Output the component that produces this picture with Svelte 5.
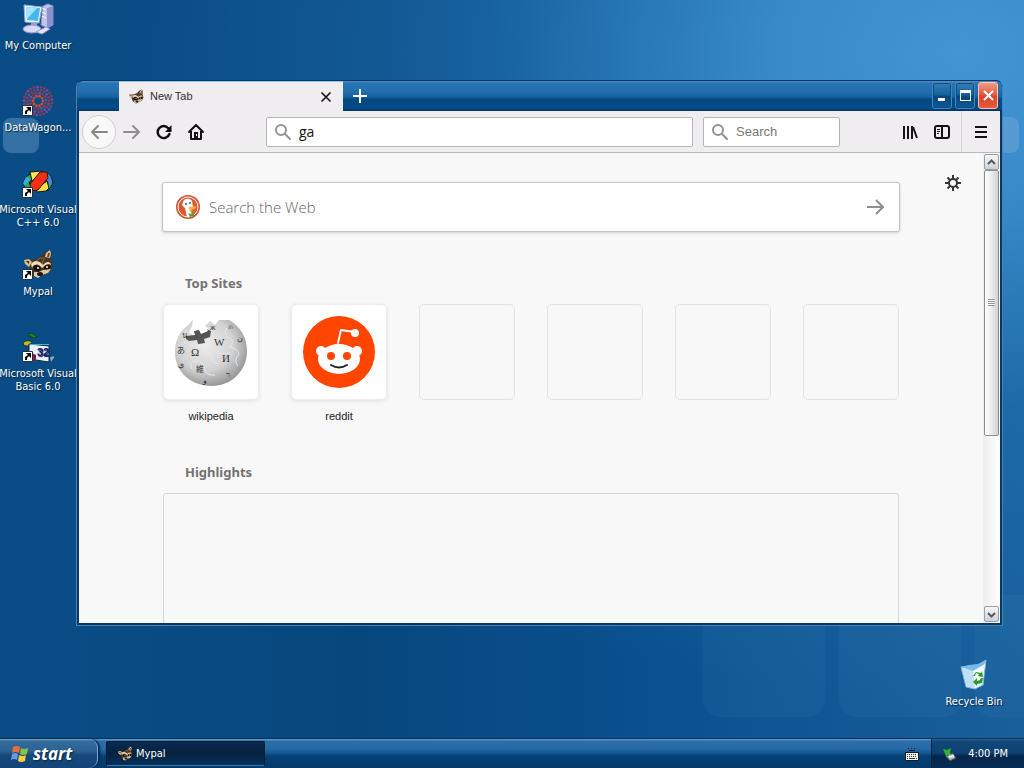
<script lang="ts">
	let address = $state('ga');
	let query = $state('');
	let webQuery = $state('');

	const shortcuts = [
		{ icon: 'computer', label: 'My Computer', linked: false },
		{ icon: 'wagon', label: 'DataWagon...', linked: true },
		{ icon: 'cpp', label: 'Microsoft Visual C++ 6.0', linked: true },
		{ icon: 'mypal', label: 'Mypal', linked: true },
		{ icon: 'basic', label: 'Microsoft Visual Basic 6.0', linked: true }
	];

	const sites = ['wikipedia', 'reddit', '', '', '', ''];

	// dots of the round DataWagon mark, laid out in rings
	const dots = [5, 8, 11, 14].flatMap((r, ring) =>
		Array.from({ length: 10 + ring * 5 }, (_, i) => {
			const a = (i / (10 + ring * 5)) * Math.PI * 2 + ring * 0.3;
			return {
				x: 16 + Math.cos(a) * r,
				y: 16 + Math.sin(a) * r,
				fill: ring === 0 ? '#c8502f' : (i + ring) % 3 ? '#913858' : '#5f559b'
			};
		})
	);
</script>

{#snippet raccoon(size: number)}
	<svg width={size} height={size} viewBox="0 0 32 32" aria-hidden="true">
		<path d="M3 14 2 11 6 10 11 11 18 8 23 3 28 1 30 5 29 11 31 17 28 23 22 26 16 29 12 27 9 23 7 18z" fill="#4b3421" />
		<path d="M2 11 7 10 10 13 7 18 3 15z" fill="#d9bc8e" />
		<path d="M4 12 7 12 7 15z" fill="#35251b" />
		<path d="M23 8 24 4 28 1 29 5 28 9z" fill="#dbc49d" />
		<path d="M25 8 26 4 28 4 27 8z" fill="#5d4630" />
		<path d="M9 15C13 9 19 13 21 16 25 11 29 13 29 16L27 15C23 15 22 18 20 19 17 15 13 14 10 19z" fill="#f0ddb6" />
		<path d="M11 17C15 15 18 17 19 20L16 23 12 21zM22 18C24 15 28 16 29 18L26 21 22 21z" fill="#18120f" />
		<path d="M12 23 17 23 21 21 29 20 26 24 20 26 16 29 12 27z" fill="#dfc69d" />
		<circle cx="16" cy="19" r="1" fill="#fff" />
		<circle cx="25" cy="18" r="1" fill="#fff" />
		<ellipse cx="18" cy="25" rx="3" ry="2" fill="#211713" />
		<path d="M14 12 18 9 23 9M20 15 22 10" stroke="#8b6b46" fill="none" />
	</svg>
{/snippet}

{#snippet magnifier()}
	<svg class="magnifier" width="16" height="16" viewBox="0 0 16 16" aria-hidden="true">
		<circle cx="6" cy="6" r="5" fill="none" stroke="#929292" stroke-width="2" />
		<path d="m10 10 5 5" stroke="#929292" stroke-width="2" stroke-linecap="round" />
	</svg>
{/snippet}

<div class="desktop">
	<div class="wallpaper" aria-hidden="true">
		<i class="tile tile-left"></i>
		<i class="tile tile-right"></i>
		<i class="tile tile-low one"></i>
		<i class="tile tile-low two"></i>
		<i class="tile tile-low three"></i>
	</div>

	<main class="workspace">
		<ul class="shortcuts">
			{#each shortcuts as item}
				<li>
					<a class="shortcut" href="#{item.icon}">
						<span class="shortcut-icon">
							{#if item.icon === 'computer'}
								<svg width="32" height="32" viewBox="0 0 32 32" aria-hidden="true">
									<path d="m21 3 5-2 5 2v19l-6 3-6-3z" fill="#c0c4e7" stroke="#8890c7" />
									<path d="m25 5 6-2v19l-6 3z" fill="#8992ce" />
									<path d="m20 5 4 2m-4 2 4 2m-4 2 4 2" stroke="#fff" />
									<path d="M2 2 20 4 17 20 3 19z" fill="#eef6ff" stroke="#96aada" />
									<path d="m4 4 14 1-2 13-11-1z" fill="#45b8ef" />
									<path d="m4 4 11 1L5 16z" fill="#a3e4fc" />
									<path d="M9 20h6v4l-6 1z" fill="#969edc" />
									<ellipse cx="10" cy="26" rx="9" ry="4" fill="#d8d9f3" stroke="#8c91c7" />
									<path d="m14 29 10-5 4 2-8 5z" fill="#e5e6f5" stroke="#949bc8" />
								</svg>
							{:else if item.icon === 'wagon'}
								<svg width="32" height="32" viewBox="0 0 32 32" aria-hidden="true">
									{#each dots as dot}
										<circle cx={dot.x} cy={dot.y} r="1.4" fill={dot.fill} />
									{/each}
								</svg>
							{:else if item.icon === 'cpp'}
								<svg width="32" height="32" viewBox="0 0 32 32" aria-hidden="true">
									<path d="M8 7 4 10 1 16l3 6 4 1 2-4-3-3 4-5z" fill="#28a948" stroke="#101c23" />
									<path d="m4 10-3 6 2 3 3-4 3-3z" fill="#3da8e6" />
									<path d="m8 5 12-1-4 6-6 4z" fill="#ffe64f" stroke="#16170e" />
									<path d="m25 5 4 4 2 7-5 8-3-3 3-5-3-5z" fill="#3f88de" stroke="#101c23" />
									<path d="m26 19 4-3-3 6-4 1z" fill="#36b849" />
									<path d="m14 22 11-8 2 7-3 3-9 1z" fill="#ffe13e" stroke="#16170e" />
									<path d="m8 17 10-12 7 0 1 6-10 12-7 1z" fill="#f43116" stroke="#27180e" />
								</svg>
							{:else if item.icon === 'mypal'}
								{@render raccoon(32)}
							{:else}
								<svg width="32" height="32" viewBox="0 0 32 32" aria-hidden="true">
									<path d="M6 3C9 1 12 3 15 6 12 8 8 6 6 3Z" fill="#247f26" stroke="#0b3820" />
									<path d="M1 13C2 9 7 9 10 11 8 16 3 16 1 13Z" fill="#b8bb38" stroke="#19371c" />
									<path d="m7 13 20 2v16l-20-3z" fill="#ecf1ff" stroke="#102a44" />
									<path d="M8 13h19v1H8z" fill="#32bdb9" />
									<path d="m10 22 4 2v6l-4-1z" fill="#8c183b" />
									<path d="m28 26 5-1-4 6z" fill="#9aa6b4" />
									<text x="15" y="25" class="basic-number">32</text>
								</svg>
							{/if}
							{#if item.linked}
								<svg class="link-arrow" width="11" height="11" viewBox="0 0 11 11" aria-hidden="true">
									<path d="M.5.5h10v10H.5z" fill="#fff" stroke="#203342" />
									<path d="M4 2h5v5L7 5 5 7v2H3V6l3-2z" fill="#000" />
								</svg>
							{/if}
						</span>
						<span>{item.label}</span>
					</a>
				</li>
			{/each}
		</ul>

		<a class="shortcut recycle" href="#recycle">
			<svg width="32" height="32" viewBox="0 0 32 32" aria-hidden="true">
				<path d="m3 8 8-1 9-1 8-5-3 25-8 4-9-2z" fill="#d6eafa" stroke="#7cb3dc" />
				<path d="m3 8 8-2 9-1 8-4-3 7-10 4z" fill="#78b9ed" />
				<path d="m4 9 11 3 2 17-8-2z" fill="#bfdff6" />
				<path d="m15 12 12-7-3 20-7 4z" fill="#f3f9ff" />
				<path d="m15 17 3-4 5 1 1-2 1 6-5-1 1-2-3-1-1 3zM25 19l-1 5-5 1v2l-4-4 4-4v3l3-1 1-2z" fill="#269d20" />
			</svg>
			<span>Recycle Bin</span>
		</a>

		<section class="window" aria-label="New Tab - Mypal">
			<header class="titlebar">
				<div class="tab">
					{@render raccoon(16)}
					<span class="tab-title">New Tab</span>
					<button class="plain" aria-label="Close tab">
						<svg width="12" height="12" viewBox="0 0 12 12"><path d="m2 2 8 8m0-8-8 8" stroke="#171717" stroke-width="1.7" stroke-linecap="round" /></svg>
					</button>
				</div>
				<button class="plain new-tab" aria-label="Open a new tab">
					<svg width="16" height="16" viewBox="0 0 16 16"><path d="M8 1v14M1 8h14" stroke="#fff" stroke-width="2" /></svg>
				</button>
				<div class="caption-buttons">
					<button class="caption" aria-label="Minimize"><svg width="13" height="13" viewBox="0 0 13 13"><path d="M2 9h7v3H2z" fill="#fff" /></svg></button>
					<button class="caption" aria-label="Maximize"><svg width="13" height="13" viewBox="0 0 13 13"><path d="M1 1h11v11H1zM2 4v7h9V4z" fill="#fff" fill-rule="evenodd" /></svg></button>
					<button class="caption close" aria-label="Close"><svg width="13" height="13" viewBox="0 0 13 13"><path d="m2 2 9 9m0-9-9 9" stroke="#fff" stroke-width="2" /></svg></button>
				</div>
			</header>

			<nav class="toolbar" aria-label="Navigation">
				<button class="plain back" aria-label="Back"><svg width="18" height="16" viewBox="0 0 18 16"><path d="M8 2 2 8l6 6M2 8h15" fill="none" stroke="#888" stroke-width="2" stroke-linecap="round" stroke-linejoin="round" /></svg></button>
				<button class="plain tool" aria-label="Forward"><svg width="18" height="16" viewBox="0 0 18 16"><path d="m10 2 6 6-6 6m6-6H1" fill="none" stroke="#8d8d8f" stroke-width="2" stroke-linecap="round" stroke-linejoin="round" /></svg></button>
				<button class="plain tool" aria-label="Reload">
					<svg width="16" height="16" viewBox="0 0 16 16"><path d="M12.3 4.2A6 6 0 1 0 13.4 10" fill="none" stroke="#0d0d0d" stroke-width="2.4" stroke-linecap="round" /><path d="M15.500 1v7H9z" fill="#0d0d0d" /></svg>
				</button>
				<button class="plain tool" aria-label="Home">
					<svg width="16" height="16" viewBox="0 0 16 16"><path d="m1 8 7-7 7 7M3 7v8h10V7" fill="none" stroke="#111" stroke-width="2" stroke-linecap="round" stroke-linejoin="round" /><path d="M6 8h4v7H6z" fill="#111" /><path d="M8 10h1v2H8z" fill="#fff" /></svg>
				</button>
				<label class="field address">
					{@render magnifier()}
					<input type="text" aria-label="Address" bind:value={address} />
				</label>
				<label class="field search">
					{@render magnifier()}
					<input type="text" aria-label="Search" placeholder="Search" bind:value={query} />
				</label>
				<div class="tools-right">
					<button class="plain tool" aria-label="Library"><svg width="16" height="16" viewBox="0 0 16 16"><path d="M2 2v13M6 2v13M10 2v13m1-12 4 11" stroke="#151515" stroke-width="2" /></svg></button>
					<button class="plain tool" aria-label="Sidebars">
						<svg width="16" height="16" viewBox="0 0 16 16"><rect x="1" y="2" width="14" height="12" rx="2" fill="none" stroke="#111" stroke-width="2" /><path d="M8 2v12" stroke="#111" stroke-width="2" /><path d="M3 5.500h3M3 7.500h3M3 9.500h2" stroke="#111" /></svg>
					</button>
					<button class="plain menu" aria-label="Open menu"><svg width="16" height="16" viewBox="0 0 16 16"><path d="M2 3h12M2 8h12M2 13h12" stroke="#111" stroke-width="2" /></svg></button>
				</div>
			</nav>

			<div class="viewport">
				<div class="page">
					<div class="page-body">
						<form class="web-search">
							<svg width="24" height="24" viewBox="0 0 24 24" aria-hidden="true">
								<circle cx="12" cy="12" r="12" fill="#d6532f" />
								<circle cx="12" cy="12" r="10" fill="#de5932" stroke="#fff" />
								<path d="M7 7c1-4 7-4 9-1l1 6-2 4 1 6-5 0-2-9-3-3z" fill="#fff" />
								<path d="m13 12 7-1-1 3-5 1 4 1-4 1z" fill="#f5b22d" />
								<path d="m12 18 3 1 3-1v3l-4 1z" fill="#54a542" />
								<circle cx="10" cy="9" r="1" fill="#365b85" />
								<circle cx="14" cy="8" r="1" fill="#365b85" />
							</svg>
							<input type="text" aria-label="Search the Web" placeholder="Search the Web" bind:value={webQuery} />
							<button class="plain" type="button" aria-label="Submit search"><svg width="18" height="16" viewBox="0 0 18 16"><path d="m10 1 7 7-7 7m7-7H1" fill="none" stroke="#8e8e8e" stroke-width="2" /></svg></button>
						</form>

						<h2>Top Sites</h2>
						<ul class="sites">
							{#each sites as site}
								<li>
									{#if site}
										<a href="#{site}">
											<span class="site-tile filled">
												{#if site === 'wikipedia'}
													<svg width="80" height="80" viewBox="0 0 80 80" aria-hidden="true">
														<defs>
															<radialGradient id="globe" cx="42%" cy="38%" r="65%">
																<stop offset="0" stop-color="#ececec" />
																<stop offset="0.6" stop-color="#d2d2d2" />
																<stop offset="1" stop-color="#929292" />
															</radialGradient>
														</defs>
														<path d="M17 13 22 8 21 14 18 21 25 24 36 23 39 18 34 14 39 9 44 13 48 8 58 8C69 14 76 25 76 39 76 59 60 74 41 74 20 74 4 60 4 40 4 28 9 19 17 13Z" fill="url(#globe)" />
														<path d="m15 24 9-1-1-4 5-1 2 4 7-3-1-2 4 2-1 6-6 2 1 4-7 1-1-4-8 1-3-2z" fill="#555" />
														<path d="M13 30q7 5 12 3c5-2 4 4 6 7 3 5 10 0 10 5-1 6 5 7 8 6M43 17q-5 5 1 8 6 3 1 8-5 4 0 7 4 3 14 1M21 57q-4-8 5-8 6-1 8 9 2 6 10 5M56 16q-4 7 2 10 6 3 1 9 8 2 9 7-6 6-1 12" fill="none" stroke="#e8e8e8" />
														<g class="globe-letters">
															<text x="20" y="44">Ω</text>
															<text x="43" y="34">W</text>
															<text x="51" y="50">И</text>
															<text x="25" y="60" class="small">維</text>
															<text x="55" y="65" class="small">ר</text>
															<text x="66" y="29" class="small">ن</text>
															<text x="6" y="41" class="small">あ</text>
															<text x="7" y="55" class="small">ي</text>
															<text x="11" y="26" class="small">น</text>
															<text x="57" y="17" class="small">ற</text>
															<text x="39" y="18" class="small">ж</text>
															<text x="32" y="71" class="small">و</text>
														</g>
													</svg>
												{:else}
													<svg width="80" height="80" viewBox="0 0 80 80" aria-hidden="true">
														<circle cx="40" cy="40" r="36" fill="#ff4500" />
														<path d="m39 31 3-13 14 2" fill="none" stroke="#fff" stroke-width="2" stroke-linecap="round" stroke-linejoin="round" />
														<circle cx="56" cy="21" r="4" fill="#fff" />
														<circle cx="22" cy="39" r="5" fill="#fff" />
														<circle cx="58" cy="39" r="5" fill="#fff" />
														<ellipse cx="40" cy="47" rx="21" ry="15" fill="#fff" />
														<circle cx="32" cy="44" r="4" fill="#ff4500" />
														<circle cx="48" cy="44" r="4" fill="#ff4500" />
														<path d="M32 53q8 5 16 0" fill="none" stroke="#20252a" stroke-width="2" stroke-linecap="round" />
													</svg>
												{/if}
											</span>
											<span>{site}</span>
										</a>
									{:else}
										<span class="site-tile"></span>
									{/if}
								</li>
							{/each}
						</ul>

						<h2>Highlights</h2>
						<div class="highlights"></div>
					</div>
					<button class="plain gear" aria-label="Customize your New Tab page">
						<svg width="16" height="16" viewBox="0 0 16 16"><circle cx="8" cy="8" r="4" fill="none" stroke="#363636" stroke-width="2" /><path d="M8 0v4M8 12v4M0 8h4M12 8h4M2.500 2.500 5 5M11 11l2.500 2.500M13.500 2.500 11 5M5 11l-2.500 2.500" stroke="#363636" stroke-width="2" /></svg>
					</button>
				</div>
				<div class="scrollbar">
					<button class="scroll-button" aria-label="Scroll up"><svg width="9" height="7" viewBox="0 0 9 7"><path d="m1 5 3.500-3.500L8 5" fill="none" stroke="#555a62" stroke-width="2" /></svg></button>
					<div class="track">
						<div class="thumb"><i></i></div>
					</div>
					<button class="scroll-button" aria-label="Scroll down"><svg width="9" height="7" viewBox="0 0 9 7"><path d="m1 2 3.500 3.500L8 2" fill="none" stroke="#555a62" stroke-width="2" /></svg></button>
				</div>
			</div>
		</section>
	</main>

	<footer class="taskbar">
		<button class="start">
			<svg width="19" height="18" viewBox="0 0 19 18" aria-hidden="true">
				<path d="M3 2q4-2 7 0L9 8Q5 6 2 8z" fill="#ef6c38" />
				<path d="M11 3q3 2 7 0l-1 6q-4 2-7 0z" fill="#83c448" />
				<path d="M2 9q3-2 6 0l-1 6Q4 13 1 15z" fill="#639be9" />
				<path d="M9 10q4 2 7 0l-1 6q-4 2-7 0z" fill="#f8ce39" />
			</svg>
			<span>start</span>
		</button>
		<button class="task">
			{@render raccoon(16)}
			<span>Mypal</span>
		</button>
		<button class="plain keyboard" aria-label="Keyboard">
			<svg width="14" height="14" viewBox="0 0 14 14" shape-rendering="crispEdges">
				<path d="M3 1.500h1m2 0h1m2 0h1M4 3.500h6" stroke="#0c1d30" />
				<path d="M0 5h14v9H0z" fill="#14202c" />
				<path d="M1 6h12v7H1z" fill="#f2f1e9" />
				<path d="M2 7.500h10M2 9.500h10" stroke="#25384c" stroke-dasharray="1 1" />
				<path d="M2 11.500h1m1 0h6m1 0h1" stroke="#25384c" />
			</svg>
		</button>
		<div class="tray">
			<svg width="16" height="16" viewBox="0 0 16 16" aria-hidden="true">
				<path d="m4 10 7-3 3 5-6 3z" fill="#a7adb1" stroke="#3b4a55" />
				<path d="m7 11 5-1" stroke="#f0f3f2" stroke-width="2" />
				<path d="m1 3 4 1 4-2-1 4 1 3-4 0 0 3-2-4-1-3z" fill="#31b52c" />
			</svg>
			<time>4:00 PM</time>
		</div>
	</footer>
</div>

<style>
	:global(body) {
		background: #074a84;
	}

	.desktop {
		position: relative;
		display: flex;
		flex-direction: column;
		min-height: 100vh;
		overflow: hidden;
		color: #fff;
		font-family: 'DejaVu Sans Condensed', 'DejaVu Sans', sans-serif;
		font-size: 11px;
		line-height: 13px;
	}

	.desktop *,
	.desktop *::before {
		box-sizing: border-box;
	}

	button,
	input {
		font: inherit;
		color: inherit;
	}

	ul {
		list-style: none;
		margin: 0;
		padding: 0;
	}

	a {
		color: inherit;
		text-decoration: none;
	}

	svg {
		display: block;
		flex-shrink: 0;
	}

	.plain {
		display: grid;
		place-items: center;
		padding: 0;
		border: 0;
		background: none;
	}

	/* Wallpaper */
	.wallpaper {
		position: absolute;
		inset: 0;
		background:
			radial-gradient(ellipse 85% 85% at 94% 7%, #4296d4 0%, rgba(60, 143, 206, 0.9) 22%, rgba(32, 112, 175, 0.6) 55%, rgba(12, 91, 154, 0) 100%),
			linear-gradient(90deg, #0a4d86 0%, #08477e 35%, #0a5190 65%, #185f9b 100%);
	}

	.tile {
		position: absolute;
		border-radius: 8px;
		background: rgba(135, 180, 222, 0.35);
	}

	.tile-left {
		left: 3px;
		top: 118px;
		width: 36px;
		height: 35px;
	}

	.tile-right {
		right: 5px;
		top: 117px;
		width: 36px;
		height: 36px;
	}

	.tile-low {
		bottom: 51px;
		width: 122px;
		height: 122px;
		border-radius: 18px;
		background: rgba(90, 155, 205, 0.09);
	}

	.one {
		right: 199px;
	}

	.two {
		right: 63px;
	}

	.three {
		right: -73px;
	}

	/* Desktop icons */
	.workspace {
		position: relative;
		flex: 1;
	}

	.shortcuts {
		width: 80px;
		margin-left: -2px;
	}

	.shortcuts li {
		height: 82px;
	}

	.shortcut {
		display: flex;
		flex-direction: column;
		align-items: center;
		gap: 4px;
		padding-top: 3px;
		text-align: center;
		text-shadow: 1px 1px 1px #06223e;
	}

	.shortcut-icon {
		position: relative;
	}

	.link-arrow {
		position: absolute;
		left: 0;
		bottom: 1px;
	}

	.basic-number {
		font: bold 11px 'Liberation Sans', sans-serif;
		fill: #151b75;
	}

	.recycle {
		position: absolute;
		right: 12px;
		bottom: 30px;
		width: 76px;
	}

	/* Browser window */
	.window {
		position: absolute;
		top: 80px;
		right: 21px;
		bottom: 112px;
		left: 76px;
		display: flex;
		flex-direction: column;
		padding: 0 2px 2px;
		border: 1px solid #4a82b2;
		border-top-color: #053565;
		border-radius: 7px 7px 0 0;
		background: #053866;
		font-family: 'Liberation Sans', sans-serif;
		overflow: hidden;
	}

	.titlebar {
		display: flex;
		height: 30px;
		flex-shrink: 0;
		margin: 0 -2px;
		padding-left: 42px;
		background: linear-gradient(#5591c6 0, #2973b1 2px, #2370b0 9px, #1862a3 16px, #04497f 18px, #044c89 27px, #023463 30px);
	}

	.tab {
		display: flex;
		align-items: center;
		gap: 6px;
		width: 224px;
		padding: 0 11px 0 9px;
		border-top: 1px solid #8fc4ef;
		background: #efedf0;
		color: #303030;
	}

	.tab-title {
		flex: 1;
	}

	.new-tab {
		width: 33px;
	}

	.caption-buttons {
		display: flex;
		gap: 3px;
		margin-left: auto;
		padding: 1px 4px 2px 0;
	}

	.caption {
		display: grid;
		place-items: center;
		width: 20px;
		padding: 0;
		border: 1px solid #4585bb;
		border-radius: 3px;
		background: linear-gradient(#3a7bb2, #17639f 45%, #06477c 55%, #0d5999);
		box-shadow: inset 0 0 0 1px #0b4e85;
	}

	.close {
		border-color: #ffc3b5;
		background: linear-gradient(#ee9c84, #e45d43 45%, #d9442a 55%, #e85b36);
		box-shadow: none;
	}

	.toolbar {
		display: flex;
		align-items: center;
		height: 42px;
		flex-shrink: 0;
		padding-left: 3px;
		border-bottom: 1px solid #b9b9bb;
		background: #efedf0;
	}

	.back {
		width: 34px;
		height: 34px;
		flex-shrink: 0;
		border: 1px solid #d2d0d3;
		border-radius: 50%;
		background: #f9f8f9;
	}

	.tool {
		width: 32px;
		height: 32px;
		flex-shrink: 0;
	}

	.field {
		display: flex;
		align-items: center;
		height: 30px;
		border: 1px solid #b5b5b7;
		border-radius: 2px;
		background: #fff;
		padding: 0 8px;
		gap: 8px;
	}

	.field input,
	.web-search input {
		flex: 1;
		min-width: 0;
		padding: 0;
		border: 0;
		outline: 0;
		background: transparent;
		color: #111;
	}

	.address {
		flex: 1;
		margin-left: 54px;
		font-family: 'Open Sans', sans-serif;
		font-size: 14px;
	}

	.search {
		width: 137px;
		margin-left: 10px;
		font-size: 13px;
	}

	.search input::placeholder {
		color: #777;
		opacity: 1;
	}

	.tools-right {
		display: flex;
		align-self: stretch;
		align-items: center;
		margin-left: 54px;
	}

	.menu {
		width: 39px;
		height: 100%;
		margin-left: 3px;
		border-left: 1px solid #d9d8db;
	}

	/* New tab page */
	.viewport {
		display: flex;
		flex: 1;
		min-height: 0;
		overflow: hidden;
		background: #f8f8f8;
	}

	.page {
		display: grid;
		grid-template-columns: 1fr minmax(0, 738px) 1fr;
		flex: 1;
		min-width: 0;
		overflow: hidden;
	}

	.page-body {
		grid-column: 2;
		display: flex;
		flex-direction: column;
		padding-top: 29px;
	}

	.gear {
		align-self: start;
		justify-self: end;
		margin: 22px 22px 0 0;
	}

	.web-search {
		display: flex;
		align-items: center;
		gap: 9px;
		height: 50px;
		flex-shrink: 0;
		padding: 0 15px 0 13px;
		border: 1px solid #c3c3c4;
		border-radius: 3px;
		background: #fff;
		box-shadow: 0 1px 3px #d0d0d0;
		font-family: 'Open Sans', sans-serif;
		font-size: 15px;
		font-weight: 300;
	}

	.web-search input::placeholder {
		color: #666;
		opacity: 1;
	}

	h2 {
		margin: 42px 23px 12px;
		color: #737373;
		font: bold 13px/18px 'Noto Sans', sans-serif;
	}

	.sites {
		display: grid;
		grid-template-columns: repeat(6, 96px);
		justify-content: space-between;
		height: 117px;
		padding: 0 1px;
		color: #222;
		text-align: center;
	}

	.site-tile {
		display: grid;
		place-items: center;
		height: 96px;
		margin-bottom: 10px;
		border: 1px solid #e3e3e4;
		border-radius: 5px;
	}

	.filled {
		border-color: #ececec;
		background: #fff;
		box-shadow: 0 1px 4px #dedede;
	}

	.globe-letters {
		font: 11px 'Liberation Serif', 'Noto Sans CJK JP', serif;
		fill: #333;
	}

	.small {
		font-size: 8px;
	}

	.highlights {
		flex: 1;
		margin: 0 1px;
		border: 1px solid #d7d7db;
		border-bottom: 0;
		border-radius: 3px 3px 0 0;
	}

	/* Scrollbar */
	.scrollbar {
		display: flex;
		flex-direction: column;
		width: 17px;
		padding: 1px;
		background: linear-gradient(90deg, #ededf0, #fff);
	}

	.scroll-button {
		display: grid;
		place-items: center;
		height: 16px;
		padding: 0;
		border: 1px solid #9b9da4;
		border-radius: 2px;
		background: linear-gradient(#f7f7f8, #cfd1d8);
	}

	.track {
		flex: 1;
	}

	.thumb {
		display: grid;
		place-items: center;
		height: 61%;
		border: 1px solid #8d8f92;
		border-radius: 2px;
		background: linear-gradient(90deg, #fff, #ececec 50%, #d0d2d0);
	}

	.thumb i {
		width: 7px;
		height: 7px;
		background: repeating-linear-gradient(#999 0 1px, #fff 1px 2px);
	}

	/* Taskbar */
	.taskbar {
		position: relative;
		display: flex;
		align-items: stretch;
		height: 30px;
		border-top: 1px solid #083158;
		background: linear-gradient(#6ba1cc 0, #2b70aa 2px, #2569a5 10px, #17568e 14px, #044175 17px, #05396a 100%);
	}

	.start {
		display: flex;
		align-items: center;
		gap: 4px;
		width: 98px;
		padding: 0 10px;
		border: 0;
		border-right: 1px solid #75a9d3;
		border-radius: 0 9px 9px 0;
		background: linear-gradient(#7ba9cc 0, #346c9d 2px, #2b6293 12px, #164979 16px, #14457a 100%);
		box-shadow: 2px 0 2px #052b50;
		font: italic bold 17px/20px 'Open Sans', sans-serif;
		text-shadow: 1px 1px 2px #092443;
	}

	.task {
		display: flex;
		align-items: center;
		gap: 3px;
		width: 159px;
		margin: 2px 0 2px 8px;
		padding: 0 10px;
		border: 1px solid #061b34;
		border-bottom-color: #3c79ab;
		border-radius: 2px;
		background: linear-gradient(#0a2b50, #04213f 50%, #06315a);
	}

	.keyboard {
		margin-left: auto;
		width: 38px;
	}

	.tray {
		display: flex;
		align-items: center;
		gap: 10px;
		padding: 0 16px 0 10px;
		border-left: 1px solid #031f3c;
		background: linear-gradient(#35658f 0, #11477a 2px, #0d4171 14px, #06264c 17px, #062c55 100%);
	}
</style>
